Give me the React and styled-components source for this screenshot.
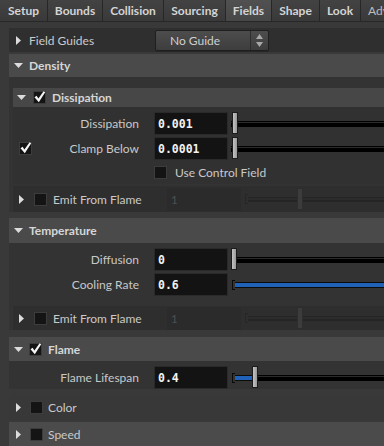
import React from 'react';
import styled, { createGlobalStyle } from 'styled-components';

const SANS = `Lato, "Noto Sans", "Liberation Sans", sans-serif`;
const MONO = `"DejaVu Sans Mono", "Liberation Mono", monospace`;

const Global = createGlobalStyle`
  html, body { margin: 0; padding: 0; background: #393939; }
  body { width: 384px; height: 446px; overflow: hidden; font-family: ${SANS}; }
  * { box-sizing: border-box; }
`;

const Root = styled.div`
  width: 384px;
  height: 446px;
  overflow: hidden;
  background: #393939;
  display: flex;
  flex-direction: column;
`;

const TabBar = styled.div`
  display: flex;
  height: 22px;
  flex-shrink: 0;
  border-bottom: 1px solid #272727;
  background: #353535;
`;

const Tab = styled.div`
  flex: 0 0 ${p => p.$w}px;
  display: flex;
  align-items: center;
  justify-content: ${p => (p.$left ? 'flex-start' : 'center')};
  padding-left: ${p => (p.$left ? 7 : 0)}px;
  border-right: 1px solid #272727;
  background: ${p => (p.$active ? 'linear-gradient(#515151, #474747)' : 'linear-gradient(#434343, #393939)')};
  color: ${p => (p.$left ? '#bdbdbd' : '#d4d4d4')};
  font: ${p => (p.$left ? 'normal' : 'bold')} 12px ${SANS};
  white-space: nowrap;
  overflow: hidden;
`;

const Body = styled.div`
  display: flex;
  flex-direction: column;
  padding: 6px 0 0 9px;
`;

const GuideRow = styled.div`
  height: 24px;
  background: #2f2f2f;
  display: flex;
  align-items: center;
  padding-left: 7px;
`;

const RowText = styled.span`
  color: #cbcbcb;
  font: 12px ${SANS};
  white-space: nowrap;
  margin-left: ${p => p.$ml || 0}px;
  width: ${p => (p.$w ? `${p.$w}px` : 'auto')};
`;

const Dropdown = styled.div`
  width: 114px;
  height: 21px;
  border: 1px solid #1f1f1f;
  border-radius: 2px;
  background: linear-gradient(#4d4d4d, #3d3d3d);
  display: flex;
  align-items: center;
  box-shadow: 0 1px 0 #262626;
`;

const DropText = styled.span`
  flex: 1;
  padding-left: 14px;
  color: #cfcfcf;
  font: 12px ${SANS};
`;

const DropArrows = styled.div`
  width: 18px;
  height: 100%;
  border-left: 1px solid #2e2e2e;
  display: flex;
  align-items: center;
  justify-content: center;
`;

const Folder = styled.section`
  display: flex;
  flex-direction: column;
  margin-top: ${p => p.$mt || 0}px;
`;

const FolderHeader = styled.div`
  height: ${p => p.$h}px;
  background: ${p => p.$bg || '#4a4a4a'};
  display: flex;
  align-items: center;
  padding-left: ${p => p.$pl}px;
`;

const Title = styled.span`
  color: ${p => (p.$bold ? '#d6d6d6' : '#c9c9c9')};
  font: ${p => (p.$bold ? 'bold' : 'normal')} 12px ${SANS};
  margin-left: ${p => p.$ml}px;
  white-space: nowrap;
  width: ${p => (p.$w ? `${p.$w}px` : 'auto')};
`;

const FolderBody = styled.div`
  display: flex;
  flex-direction: column;
  padding-left: 4px;
  padding-top: ${p => p.$pt || 0}px;
  background: #333333;
`;

const SubBody = styled.div`
  display: flex;
  flex-direction: column;
  background: #313131;
  padding: 5px 0 4px;
`;

const ParamRow = styled.div`
  height: ${p => p.$h || 23}px;
  display: flex;
  align-items: center;
  margin-top: ${p => p.$mt || 0}px;
`;

const LabelCell = styled.div`
  flex: 0 0 128px;
  display: flex;
  align-items: center;
  justify-content: space-between;
  padding: 0 2px 0 6px;
`;

const Label = styled.span`
  margin-left: auto;
  color: #c8c8c8;
  font: 12px ${SANS};
  white-space: nowrap;
`;

const Field = styled.div`
  flex: 0 0 74px;
  height: 23px;
  margin-left: 13px;
  background: ${p => (p.$disabled ? '#2b2b2b' : '#131313')};
  border: 1px solid ${p => (p.$disabled ? '#2b2b2b' : '#2a2a2a')};
  display: flex;
  align-items: center;
  padding-left: 3px;
  color: ${p => (p.$disabled ? '#4f4f4f' : '#f2f2f2')};
  font: ${p => (p.$disabled ? 'normal' : 'bold')} 11.5px ${p => (p.$disabled ? SANS : MONO)};
`;

const SliderWrap = styled.div`
  position: relative;
  flex: 1;
  height: 23px;
  margin-left: 3px;
  display: flex;
  align-items: center;
`;

const Bracket = styled.div`
  width: 3px;
  height: 10px;
  border: 1px solid ${p => (p.$disabled ? '#262626' : '#0a0a0a')};
  border-right: none;
  margin-left: 1px;
  flex-shrink: 0;
`;

const Track = styled.div`
  flex: 1;
  height: ${p => (p.$disabled ? 5 : 6)}px;
  background: ${p =>
    p.$disabled
      ? 'linear-gradient(#252525 0 1px, #2c2c2c 1px 3px, #252525 3px)'
      : 'linear-gradient(#000 0 1px, #2b2b2b 1px 2px, #000 2px)'};
  position: relative;
`;

const Fill = styled.div`
  position: absolute;
  left: 0;
  top: 0;
  bottom: 0;
  background: linear-gradient(#0b0b0b 0 1px, #2062b8 1px 5px, #0b0b0b 5px);
`;

const Handle = styled.div`
  position: absolute;
  top: 0;
  width: 6px;
  height: 22px;
  border: 1px solid ${p => (p.$disabled ? '#2d2d2d' : '#1c1c1c')};
  background: ${p => (p.$disabled ? '#3c3c3c' : 'linear-gradient(90deg, #c4c4c4, #9a9a9a)')};
`;

const ControlRow = styled.div`
  height: 16px;
  display: flex;
  align-items: center;
  margin-top: 4px;
  padding-left: 128px;
`;

const CollapsedRow = styled.div`
  height: ${p => p.$h || 25}px;
  margin-top: ${p => p.$mt || 0}px;
  background: ${p => p.$bg || '#2e2e2e'};
  display: flex;
  align-items: center;
  padding-left: ${p => p.$pl}px;
`;

const Box = styled.div`
  width: 13px;
  height: 13px;
  flex-shrink: 0;
  background: #141414;
  border: 1px solid #3c3c3c;
  margin-left: ${p => p.$ml || 0}px;
  position: relative;
`;

const Arrow = ({ dir, ml }) =>
  dir === 'down' ? (
    <svg width="9" height="5" viewBox="0 0 9 5" style={{ marginLeft: ml || 0, flexShrink: 0 }}>
      <polygon points="0,0 9,0 4.5,5" fill="#dcdcdc" />
    </svg>
  ) : (
    <svg width="5" height="9" viewBox="0 0 5 9" style={{ marginLeft: ml || 0, flexShrink: 0 }}>
      <polygon points="0,0 5,4.5 0,9" fill="#dcdcdc" />
    </svg>
  );

const Check = ({ checked, ml }) => (
  <Box $ml={ml}>
    {checked && (
      <svg width="13" height="13" viewBox="0 0 13 13" style={{ position: 'absolute', left: -1, top: -2 }}>
        <path d="M1.5 7.2 L3.6 5.8 L5.4 8.6 L10.6 1.2 L12.2 2.2 L5.8 12.2 Z" fill="#f4f4f4" />
      </svg>
    )}
  </Box>
);

const Slider = ({ handle, fill, bracket, disabled }) => (
  <SliderWrap>
    {bracket && <Bracket $disabled={disabled} />}
    <Track $disabled={disabled}>{fill != null && <Fill style={{ width: fill }} />}</Track>
    {handle != null && <Handle $disabled={disabled} style={{ left: handle }} />}
  </SliderWrap>
);

const Param = ({ label, value, check, mt, slider }) => (
  <ParamRow $mt={mt}>
    <LabelCell>
      {check && <Check checked />}
      <Label>{label}</Label>
    </LabelCell>
    <Field>{value}</Field>
    <Slider {...slider} />
  </ParamRow>
);

const EmitRow = ({ mt, h }) => (
  <CollapsedRow $mt={mt} $pl={6} $h={h}>
    <Arrow dir="right" />
    <Check ml={10} />
    <Title $ml={6} $w={101}>Emit From Flame</Title>
    <Field $disabled>1</Field>
    <Slider bracket disabled handle={53} />
  </CollapsedRow>
);

const tabs = [
  ['Setup', 48],
  ['Bounds', 55],
  ['Collision', 61],
  ['Sourcing', 62],
  ['Fields', 46],
  ['Shape', 48],
  ['Look', 41],
  ['Advanced', 60],
];

export default function App() {
  return (
    <Root>
      <Global />
      <TabBar>
        {tabs.map(([t, w], i) => (
          <Tab key={t} $w={w} $active={t === 'Fields'} $left={i === tabs.length - 1}>
            {t}
          </Tab>
        ))}
      </TabBar>
      <Body>
        <GuideRow>
          <Arrow dir="right" />
          <RowText $ml={8} $w={126}>Field Guides</RowText>
          <Dropdown>
            <DropText>No Guide</DropText>
            <DropArrows>
              <svg width="7" height="13" viewBox="0 0 7 13">
                <polygon points="3.5,0 7,5 0,5" fill="#a8a8a8" />
                <polygon points="0,8 7,8 3.5,13" fill="#a8a8a8" />
              </svg>
            </DropArrows>
          </Dropdown>
        </GuideRow>

        <Folder $mt={2}>
          <FolderHeader $h={23} $pl={5}>
            <Arrow dir="down" />
            <Title $bold $ml={6}>Density</Title>
          </FolderHeader>
          <FolderBody $pt={11}>
            <Folder>
              <FolderHeader $h={19} $pl={4} $bg="#474747">
                <Arrow dir="down" />
                <Check checked ml={7} />
                <Title $bold $ml={6}>Dissipation</Title>
              </FolderHeader>
              <SubBody>
                <Param label="Dissipation" value="0.001" slider={{ handle: 1 }} />
                <Param label="Clamp Below" value="0.0001" check mt={2} slider={{ handle: 1 }} />
                <ControlRow>
                  <Check ml={13} />
                  <Title $ml={8}>Use Control Field</Title>
                </ControlRow>
              </SubBody>
            </Folder>
            <EmitRow mt={2} h={26} />
          </FolderBody>
        </Folder>

        <Folder $mt={6}>
          <FolderHeader $h={25} $pl={5}>
            <Arrow dir="down" />
            <Title $bold $ml={6}>Temperature</Title>
          </FolderHeader>
          <FolderBody $pt={5}>
            <Param label="Diffusion" value="0" slider={{ handle: 0 }} />
            <Param label="Cooling Rate" value="0.6" mt={2} slider={{ bracket: true, fill: '100%' }} />
            <EmitRow mt={10} h={24} />
          </FolderBody>
        </Folder>

        <Folder $mt={7}>
          <FolderHeader $h={24} $pl={5}>
            <Arrow dir="down" />
            <Check checked ml={6} />
            <Title $bold $ml={6}>Flame</Title>
          </FolderHeader>
          <FolderBody $pt={5}>
            <Param label="Flame Lifespan" value="0.4" slider={{ bracket: true, fill: 19, handle: 21 }} />
          </FolderBody>
        </Folder>

        <CollapsedRow $mt={6} $pl={7} $bg="#383838">
          <Arrow dir="right" />
          <Check ml={9} />
          <Title $ml={5}>Color</Title>
        </CollapsedRow>
        <CollapsedRow $mt={2} $pl={7} $h={24} $bg="#4b4b4b">
          <Arrow dir="right" />
          <Check ml={9} />
          <Title $ml={5}>Speed</Title>
        </CollapsedRow>
      </Body>
    </Root>
  );
}
